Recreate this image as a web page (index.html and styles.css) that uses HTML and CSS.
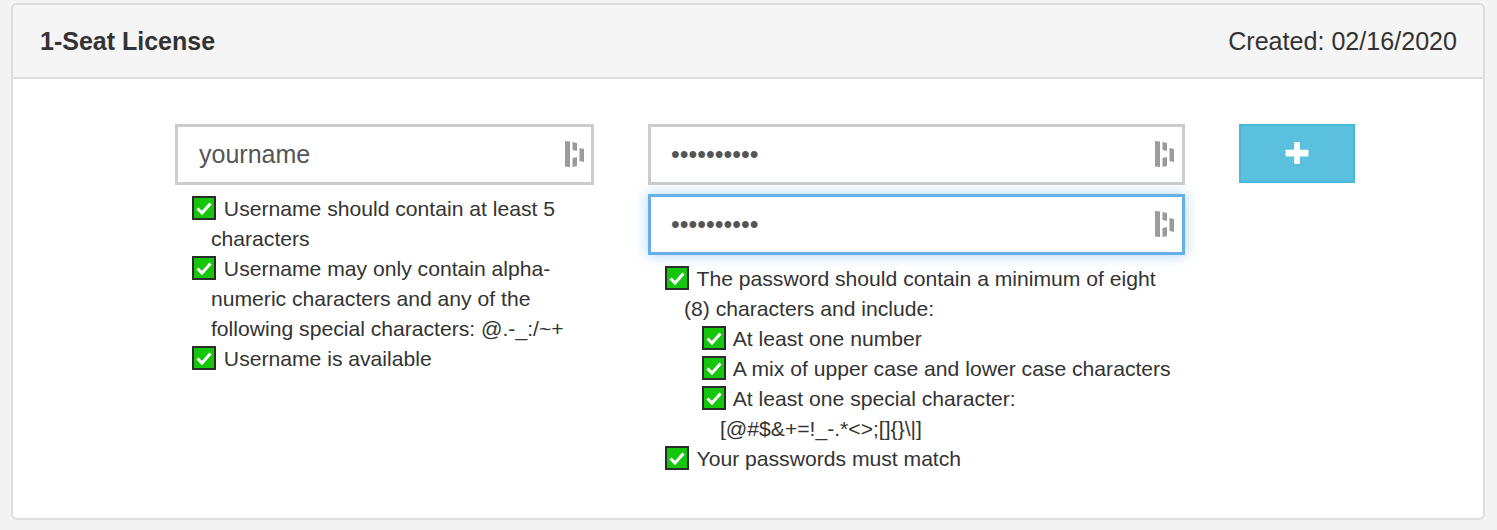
FILE: index.html
```html
<!DOCTYPE html>
<html>
<head>
    <meta charset="utf-8">
    <meta name="viewport" content="width=device-width, initial-scale=1">
    <title>1-Seat License</title>
    <link rel="stylesheet" href="styles.css">
</head>
<body>
    <svg class="svgDefs" width="0" height="0">
        <symbol id="dash" viewBox="0 0 20 26">
            <path d="M0 0 L5 .5 V26 L0 25.5 Z"/>
            <path d="M7.5 1 L12 2 V10 L7.5 9 Z"/>
            <path d="M7.5 17 L12 16 V25 L7.5 26 Z"/>
            <path d="M14.5 7 L19 8 V21 L14.5 20 Z"/>
        </symbol>
        <symbol id="check" viewBox="0 0 24 24">
            <rect x="1" y="1" width="22" height="22" fill="#16c60c" stroke="#2b2b2b" stroke-width="2"/>
            <path d="M5.5 12.5 L10 17 L18.5 7.5" fill="none" stroke="#fff" stroke-width="3"/>
        </symbol>
    </svg>

    <div class="card">
        <div class="cardHeader">
            <span class="cardTitle">1-Seat License</span>
            <span class="cardDate">Created: 02/16/2020</span>
        </div>
        <div class="cardBody">
            <div class="userColumn">
                <div class="field">
                    <input class="textInput" type="text" value="yourname" readonly>
                    <svg class="dashIcon"><use href="#dash"/></svg>
                </div>
                <ul class="rules">
                    <li><svg class="checkIcon"><use href="#check"/></svg> Username should contain at least 5 characters</li>
                    <li><svg class="checkIcon"><use href="#check"/></svg> Username may only contain alpha-numeric characters and any of the following special characters: @.-_:/~+</li>
                    <li><svg class="checkIcon"><use href="#check"/></svg> Username is available</li>
                </ul>
            </div>
            <div class="passColumn">
                <div class="field">
                    <input class="textInput" type="password" value="yourname12" readonly>
                    <svg class="dashIcon"><use href="#dash"/></svg>
                </div>
                <div class="field">
                    <input class="textInput focused" type="password" value="yourname12" readonly>
                    <svg class="dashIcon"><use href="#dash"/></svg>
                </div>
                <ul class="rules">
                    <li><svg class="checkIcon"><use href="#check"/></svg> The password should contain a minimum of eight (8) characters and include:
                        <ul class="subRules">
                            <li><svg class="checkIcon"><use href="#check"/></svg> At least one number</li>
                            <li><svg class="checkIcon"><use href="#check"/></svg> A mix of upper case and lower case characters</li>
                            <li><svg class="checkIcon"><use href="#check"/></svg> At least one special character: <span class="charList">[@#$&amp;+=!_-.*&lt;&gt;;[]{}\|]</span></li>
                        </ul>
                    </li>
                    <li><svg class="checkIcon"><use href="#check"/></svg> Your passwords must match</li>
                </ul>
            </div>
            <button class="addButton" aria-label="Add">
                <svg class="plusIcon" viewBox="0 0 24 24"><path d="M9 1 Q9 0 10 0 H14 Q15 0 15 1 V8 H23 Q24 8 24 9 V14 Q24 15 23 15 H15 V22 Q15 23 14 23 H10 Q9 23 9 22 V15 H1 Q0 15 0 14 V9 Q0 8 1 8 H9 Z"/></svg>
            </button>
        </div>
    </div>
</body>
</html>
```

FILE: styles.css
```css
* {
    box-sizing: border-box;
}

body {
    margin: 3px 12px 0 11px;
    background-color: #f3f3f3;
    color: #333;
    font-family: "Liberation Sans", Arial, sans-serif;
}

.svgDefs {
    position: absolute;
}

.card {
    height: 517px;
    background-color: #fff;
    border: 2px solid #ddd;
    border-radius: 6px;
    overflow: hidden;
}

.cardHeader {
    display: flex;
    justify-content: space-between;
    align-items: center;
    height: 74px;
    padding: 0 26px 0 27px;
    background-color: #f5f5f5;
    border-bottom: 2px solid #ddd;
    font-size: 25px;
}

.cardTitle {
    font-weight: bold;
}

.cardDate {
    font-size: 25.1px;
}

.cardBody {
    display: flex;
    align-items: flex-start;
    gap: 54px;
    padding: 45px 0 0 162px;
}

.userColumn {
    width: 419px;
}

.passColumn {
    display: flex;
    flex-direction: column;
    gap: 9px;
    width: 537px;
}

.field {
    position: relative;
    height: 61px;
}

.textInput {
    display: block;
    width: 100%;
    height: 100%;
    padding: 0 60px 0 21px;
    border: 3px solid #ccc;
    background-color: #fff;
    color: #555;
    font-family: inherit;
    font-size: 25px;
    outline: none;
}

.passColumn .textInput {
    padding-left: 20px;
}

.focused {
    border-color: #66afe9;
    box-shadow: 0 0 13px rgba(102, 175, 233, 0.55);
}

.dashIcon {
    position: absolute;
    top: 17px;
    right: 9px;
    width: 20px;
    height: 26px;
    fill: #9b9b9b;
}

.passColumn .dashIcon {
    right: 10px;
}

.rules {
    margin: 9px 0 0;
    padding: 0 10px 0 36px;
    list-style: none;
    font-size: 21.13px;
    line-height: 30px;
    text-indent: -19px;
}

.passColumn .rules {
    margin-top: 0;
}

.subRules {
    padding: 0 0 0 36px;
    list-style: none;
    text-indent: -18px;
}

.charList {
    white-space: nowrap;
}

.checkIcon {
    display: inline-block;
    width: 24px;
    height: 24px;
    vertical-align: -4px;
    margin-right: 2px;
}

.addButton {
    display: flex;
    justify-content: center;
    align-items: center;
    width: 116px;
    height: 59px;
    padding: 0;
    background-color: #5bc0de;
    border: 2px solid #46b8da;
    cursor: pointer;
}

.plusIcon {
    width: 24px;
    height: 23px;
    fill: #fff;
}
```
